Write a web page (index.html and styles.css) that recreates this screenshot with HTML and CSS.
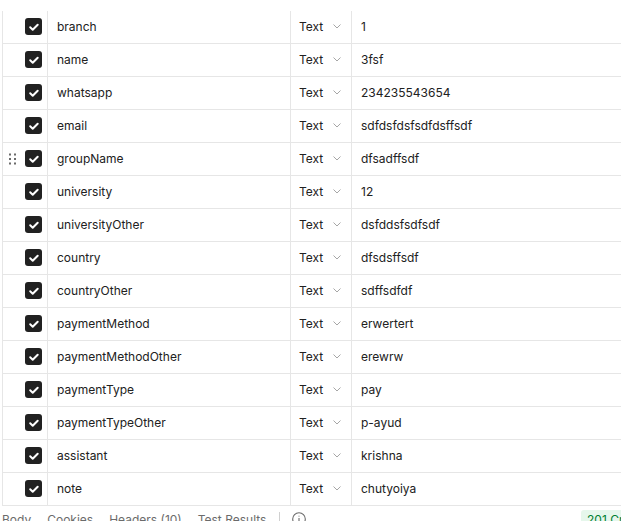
FILE: index.html
```html
<!DOCTYPE html>
<html>
<head>
<meta charset="utf-8">
<link rel="stylesheet" href="styles.css">
</head>
<body>
<div class="page">
  <div class="table">
    <div class="row"><div class="c-check"><span class="cb"><svg viewBox="0 0 16 16"><path d="M4.2 8.3l2.5 2.4 5-5" /></svg></span></div><div class="c-key">branch</div><div class="c-type">Text<svg class="chev" viewBox="0 0 8 5"><path d="M0.5 0.5l3.5 3.5 3.5-3.5"/></svg></div><div class="c-val">1</div></div>
    <div class="row"><div class="c-check"><span class="cb"><svg viewBox="0 0 16 16"><path d="M4.2 8.3l2.5 2.4 5-5" /></svg></span></div><div class="c-key">name</div><div class="c-type">Text<svg class="chev" viewBox="0 0 8 5"><path d="M0.5 0.5l3.5 3.5 3.5-3.5"/></svg></div><div class="c-val">3fsf</div></div>
    <div class="row"><div class="c-check"><span class="cb"><svg viewBox="0 0 16 16"><path d="M4.2 8.3l2.5 2.4 5-5" /></svg></span></div><div class="c-key">whatsapp</div><div class="c-type">Text<svg class="chev" viewBox="0 0 8 5"><path d="M0.5 0.5l3.5 3.5 3.5-3.5"/></svg></div><div class="c-val">234235543654</div></div>
    <div class="row"><div class="c-check"><span class="cb"><svg viewBox="0 0 16 16"><path d="M4.2 8.3l2.5 2.4 5-5" /></svg></span></div><div class="c-key">email</div><div class="c-type">Text<svg class="chev" viewBox="0 0 8 5"><path d="M0.5 0.5l3.5 3.5 3.5-3.5"/></svg></div><div class="c-val">sdfdsfdsfsdfdsffsdf</div></div>
    <div class="row"><div class="c-check"><svg class="drag" viewBox="0 0 8 12"><rect x="0" y="0.5" width="2" height="2"/><rect x="5" y="0.5" width="2" height="2"/><rect x="0" y="5" width="2" height="2"/><rect x="5" y="5" width="2" height="2"/><rect x="0" y="9.5" width="2" height="2"/><rect x="5" y="9.5" width="2" height="2"/></svg><span class="cb"><svg viewBox="0 0 16 16"><path d="M4.2 8.3l2.5 2.4 5-5" /></svg></span></div><div class="c-key">groupName</div><div class="c-type">Text<svg class="chev" viewBox="0 0 8 5"><path d="M0.5 0.5l3.5 3.5 3.5-3.5"/></svg></div><div class="c-val">dfsadffsdf</div></div>
    <div class="row"><div class="c-check"><span class="cb"><svg viewBox="0 0 16 16"><path d="M4.2 8.3l2.5 2.4 5-5" /></svg></span></div><div class="c-key">university</div><div class="c-type">Text<svg class="chev" viewBox="0 0 8 5"><path d="M0.5 0.5l3.5 3.5 3.5-3.5"/></svg></div><div class="c-val">12</div></div>
    <div class="row"><div class="c-check"><span class="cb"><svg viewBox="0 0 16 16"><path d="M4.2 8.3l2.5 2.4 5-5" /></svg></span></div><div class="c-key">universityOther</div><div class="c-type">Text<svg class="chev" viewBox="0 0 8 5"><path d="M0.5 0.5l3.5 3.5 3.5-3.5"/></svg></div><div class="c-val">dsfddsfsdfsdf</div></div>
    <div class="row"><div class="c-check"><span class="cb"><svg viewBox="0 0 16 16"><path d="M4.2 8.3l2.5 2.4 5-5" /></svg></span></div><div class="c-key">country</div><div class="c-type">Text<svg class="chev" viewBox="0 0 8 5"><path d="M0.5 0.5l3.5 3.5 3.5-3.5"/></svg></div><div class="c-val">dfsdsffsdf</div></div>
    <div class="row"><div class="c-check"><span class="cb"><svg viewBox="0 0 16 16"><path d="M4.2 8.3l2.5 2.4 5-5" /></svg></span></div><div class="c-key">countryOther</div><div class="c-type">Text<svg class="chev" viewBox="0 0 8 5"><path d="M0.5 0.5l3.5 3.5 3.5-3.5"/></svg></div><div class="c-val">sdffsdfdf</div></div>
    <div class="row"><div class="c-check"><span class="cb"><svg viewBox="0 0 16 16"><path d="M4.2 8.3l2.5 2.4 5-5" /></svg></span></div><div class="c-key">paymentMethod</div><div class="c-type">Text<svg class="chev" viewBox="0 0 8 5"><path d="M0.5 0.5l3.5 3.5 3.5-3.5"/></svg></div><div class="c-val">erwertert</div></div>
    <div class="row"><div class="c-check"><span class="cb"><svg viewBox="0 0 16 16"><path d="M4.2 8.3l2.5 2.4 5-5" /></svg></span></div><div class="c-key">paymentMethodOther</div><div class="c-type">Text<svg class="chev" viewBox="0 0 8 5"><path d="M0.5 0.5l3.5 3.5 3.5-3.5"/></svg></div><div class="c-val">erewrw</div></div>
    <div class="row"><div class="c-check"><span class="cb"><svg viewBox="0 0 16 16"><path d="M4.2 8.3l2.5 2.4 5-5" /></svg></span></div><div class="c-key">paymentType</div><div class="c-type">Text<svg class="chev" viewBox="0 0 8 5"><path d="M0.5 0.5l3.5 3.5 3.5-3.5"/></svg></div><div class="c-val">pay</div></div>
    <div class="row"><div class="c-check"><span class="cb"><svg viewBox="0 0 16 16"><path d="M4.2 8.3l2.5 2.4 5-5" /></svg></span></div><div class="c-key">paymentTypeOther</div><div class="c-type">Text<svg class="chev" viewBox="0 0 8 5"><path d="M0.5 0.5l3.5 3.5 3.5-3.5"/></svg></div><div class="c-val">p-ayud</div></div>
    <div class="row"><div class="c-check"><span class="cb"><svg viewBox="0 0 16 16"><path d="M4.2 8.3l2.5 2.4 5-5" /></svg></span></div><div class="c-key">assistant</div><div class="c-type">Text<svg class="chev" viewBox="0 0 8 5"><path d="M0.5 0.5l3.5 3.5 3.5-3.5"/></svg></div><div class="c-val">krishna</div></div>
    <div class="row"><div class="c-check"><span class="cb"><svg viewBox="0 0 16 16"><path d="M4.2 8.3l2.5 2.4 5-5" /></svg></span></div><div class="c-key">note</div><div class="c-type">Text<svg class="chev" viewBox="0 0 8 5"><path d="M0.5 0.5l3.5 3.5 3.5-3.5"/></svg></div><div class="c-val">chutyoiya</div></div>
  </div>
  <div class="tabs">
    <span class="tab t-body">Body</span>
    <span class="tab">Cookies</span>
    <span class="tab">Headers (10)</span>
    <span class="tab">Test Results</span>
    <span class="sep"></span>
    <svg class="info" viewBox="0 0 14 14"><circle cx="7" cy="7" r="6.3"/><path d="M7 6v4M7 3.8v0.6"/></svg>
    <span class="status">201 Created</span>
  </div>
</div>
</body>
</html>
```
FILE: styles.css
```css
html, body {
  margin: 0;
  padding: 0;
  background: #ffffff;
  overflow: hidden;
}
body {
  font-family: Inter, "Noto Sans", "Liberation Sans", sans-serif;
  font-size: 12px;
  color: #212121;
}
.page {
  width: 621px;
  height: 521px;
  overflow: hidden;
  padding-top: 11px;
  box-sizing: border-box;
}
.table {
  margin-left: 2px;
  border-left: 1px solid #e6e6e6;
  width: 700px;
}
.row {
  display: grid;
  grid-template-columns: 45px 243px 61px 1fr;
  height: 32px;
  border-bottom: 1px solid #e6e6e6;
}
.row > div {
  display: flex;
  align-items: center;
  border-right: 1px solid #e6e6e6;
  padding-bottom: 1px;
}
.c-check {
  position: relative;
  justify-content: flex-start;
  padding-left: 22px;
}
.cb {
  width: 17px;
  height: 17px;
  border-radius: 3px;
  background: #212121;
  display: flex;
  align-items: center;
  justify-content: center;
}
.cb svg {
  width: 16px;
  height: 16px;
  fill: none;
  stroke: #ffffff;
  stroke-width: 2;
  stroke-linecap: round;
  stroke-linejoin: round;
}
.drag {
  position: absolute;
  left: 6px;
  top: 10px;
  width: 8px;
  height: 12px;
  fill: #6b6b6b;
}
.c-key {
  padding-left: 9px;
}
.c-type {
  padding-left: 8px;
  color: #212121;
}
.chev {
  width: 8px;
  height: 5px;
  margin-left: 10px;
  fill: none;
  stroke: #a6a6a6;
  stroke-width: 1;
}
.c-val {
  padding-left: 9px;
  border-right: none !important;
}
.tabs {
  display: flex;
  align-items: center;
  height: 22px;
  padding-top: 2px;
  color: #6b6b6b;
  font-size: 12px;
}
.tab {
  margin-right: 16px;
}
.t-body {
  margin-left: 2px;
}
.sep {
  width: 1px;
  height: 14px;
  background: #d0d0d0;
  margin-left: -3px;
  margin-right: 12px;
}
.info {
  width: 14px;
  height: 14px;
  fill: none;
  stroke: #6b6b6b;
  stroke-width: 1.1;
}
.status {
  margin-left: auto;
  margin-right: -44px;
  background: #e6f7ec;
  color: #007f31;
  padding: 2px 6px;
  border-radius: 3px;
  width: 72px;
}
```
